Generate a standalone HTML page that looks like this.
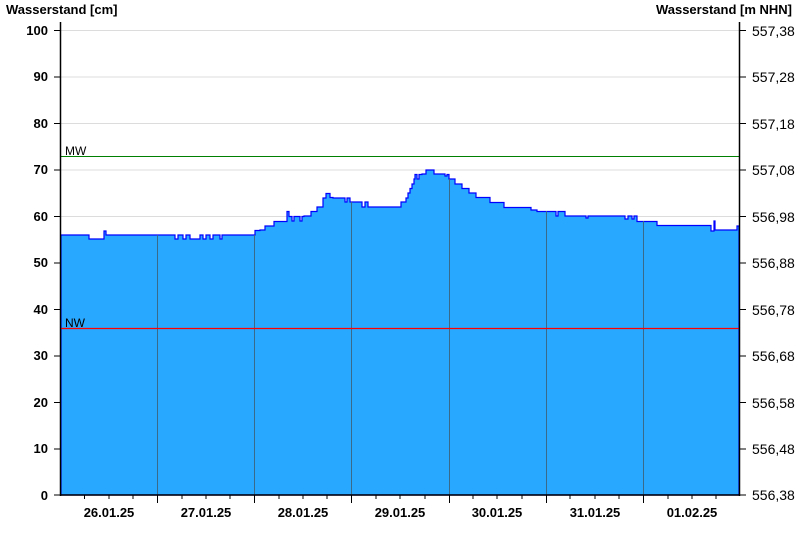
<!DOCTYPE html>
<html><head><style>
body{margin:0;background:#fff;}
svg{display:block;font-family:"Liberation Sans",Arial,sans-serif;}
.t{font-size:13px;font-weight:bold;fill:#000;}
.l{font-size:13px;fill:#000;}
</style></head><body>
<svg width="800" height="550" viewBox="0 0 800 550">
<g stroke="#dcdcdc" stroke-width="1">
<line x1="61" y1="30.5" x2="739" y2="30.5"/>
<line x1="61" y1="77" x2="739" y2="77"/>
<line x1="61" y1="123.5" x2="739" y2="123.5"/>
<line x1="61" y1="170" x2="739" y2="170"/>
<line x1="61" y1="216.5" x2="739" y2="216.5"/>
<line x1="61" y1="263" x2="739" y2="263"/>
</g>
<path fill="#29a8ff" stroke="#0000ff" stroke-width="1.2" d="M61,235 H89 V239 H104 V231 H106 V235 H175 V239 H178 V235 H183 V239 H186 V235 H190 V239 H200 V235 H203 V239 H206 V235 H210 V239 H213 V235 H220 V239 H222 V235 H255 V230.5 H260 V230 H265 V226 H274 V221.5 H287 V211.5 H289 V216.5 H292 V221 H294 V216.5 H300 V221 H302 V216.5 H304 V216 H311 V211.5 H317 V207 H323 V198 H326 V193.5 H330 V197.5 H333 V198 H345 V202 H347 V198 H350 V202 H362 V207 H365 V202 H368 V207 H401 V202 H406 V198 H408 V193 H410 V188.5 H412 V184 H414 V179 H415 V174.5 H417 V179 H419 V174.5 H422 V174 H426 V170 H434 V174 H445 V176 H447 V174.5 H449 V179 H455 V184 H462 V188.5 H469 V193 H476 V197.5 H490 V202.5 H504 V207.5 H531 V210 H537 V211.5 H556 V216 H558 V211.5 H565 V216 H586 V218 H588 V216 H625 V219 H628 V216 H632 V219 H634 V216 H637 V221.5 H657 V225.5 H711 V231 H714 V221 H715 V230 H737 V226 H739 V495 H61 Z"/>
<g stroke="#3a6a8a" stroke-width="1">
<line x1="157.5" y1="235" x2="157.5" y2="495"/>
<line x1="254.5" y1="235" x2="254.5" y2="495"/>
<line x1="351.5" y1="202" x2="351.5" y2="495"/>
<line x1="449.5" y1="179" x2="449.5" y2="495"/>
<line x1="546.5" y1="211" x2="546.5" y2="495"/>
<line x1="643.5" y1="221" x2="643.5" y2="495"/>
</g>
<line x1="61" y1="156.5" x2="739" y2="156.5" stroke="#008000" stroke-width="1"/>
<line x1="61" y1="328.5" x2="739" y2="328.5" stroke="#ff0000" stroke-width="1.2"/>
<text x="65" y="155" class="l" style="font-size:12px">MW</text>
<text x="65" y="327" class="l" style="font-size:12px">NW</text>
<g stroke="#000" stroke-width="1.5">
<line x1="60.5" y1="22" x2="60.5" y2="496"/>
<line x1="739.5" y1="22" x2="739.5" y2="496"/>
<line x1="60" y1="495" x2="740" y2="495"/>
</g>
<g stroke="#000" stroke-width="1">
<path d="M54,30.5h6M54,77h6M54,123.5h6M54,170h6M54,216.5h6M54,263h6M54,309.5h6M54,356h6M54,402.5h6M54,449h6M54,495h6"/>
<path d="M740,30.5h6M740,77h6M740,123.5h6M740,170h6M740,216.5h6M740,263h6M740,309.5h6M740,356h6M740,402.5h6M740,449h6M740,495h6"/>
<path d="M157.5,495v8M254.5,495v8M351.5,495v8M449.5,495v8M546.5,495v8M643.5,495v8"/>
<path d="M84.5,495v4M109,495v4M133,495v4M182,495v4M206,495v4M230,495v4M279,495v4M303,495v4M327,495v4M376,495v4M400,495v4M425,495v4M473,495v4M497,495v4M522,495v4M570,495v4M595,495v4M619,495v4M668,495v4M692,495v4M716,495v4"/>
</g>
<text x="6" y="14" class="t">Wasserstand [cm]</text>
<text x="792" y="14" class="t" text-anchor="end">Wasserstand [m NHN]</text>
<g class="t" text-anchor="end">
<text x="48" y="35">100</text><text x="48" y="81">90</text><text x="48" y="128">80</text><text x="48" y="174">70</text><text x="48" y="221">60</text><text x="48" y="267">50</text><text x="48" y="314">40</text><text x="48" y="360">30</text><text x="48" y="407">20</text><text x="48" y="453">10</text><text x="48" y="500">0</text>
</g>
<g class="l" style="font-size:14px">
<text x="752" y="36">557,38</text><text x="752" y="82">557,28</text><text x="752" y="129">557,18</text><text x="752" y="175">557,08</text><text x="752" y="222">556,98</text><text x="752" y="268">556,88</text><text x="752" y="315">556,78</text><text x="752" y="361">556,68</text><text x="752" y="408">556,58</text><text x="752" y="454">556,48</text><text x="752" y="500">556,38</text>
</g>
<g class="t" text-anchor="middle">
<text x="109" y="517">26.01.25</text><text x="206" y="517">27.01.25</text><text x="303" y="517">28.01.25</text><text x="400" y="517">29.01.25</text><text x="497" y="517">30.01.25</text><text x="595" y="517">31.01.25</text><text x="692" y="517">01.02.25</text>
</g>
</svg>
</body></html>
